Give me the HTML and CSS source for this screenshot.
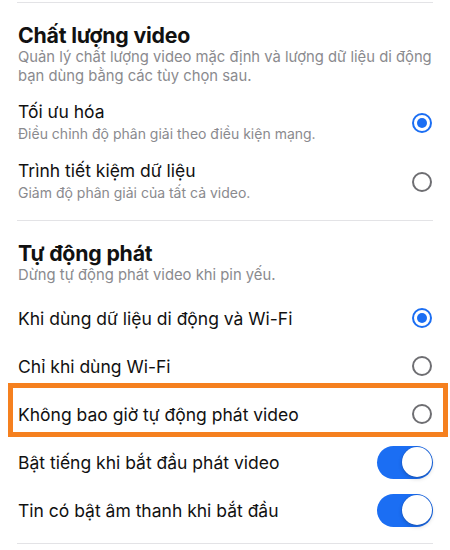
FILE: index.html
```html
<!DOCTYPE html>
<html lang="vi">
<head>
<meta charset="utf-8">
<link rel="stylesheet" href="styles.css">
</head>
<body>
<div class="page">
  <div class="divider first"></div>
  <section class="section">
    <h2 class="heading">Chất lượng video</h2>
    <p class="sub">Quản lý chất lượng video mặc định và lượng dữ liệu di động bạn dùng bằng các tùy chọn sau.</p>
    <div class="option">
      <div class="text">
        <div class="title">Tối ưu hóa</div>
        <div class="desc">Điều chỉnh độ phân giải theo điều kiện mạng.</div>
      </div>
      <span class="radio on"></span>
    </div>
    <div class="option">
      <div class="text">
        <div class="title">Trình tiết kiệm dữ liệu</div>
        <div class="desc">Giảm độ phân giải của tất cả video.</div>
      </div>
      <span class="radio"></span>
    </div>
  </section>
  <div class="divider"></div>
  <section class="section two">
    <h2 class="heading">Tự động phát</h2>
    <p class="sub">Dừng tự động phát video khi pin yếu.</p>
    <div class="list">
      <div class="row"><span class="title">Khi dùng dữ liệu di động và Wi-Fi</span><span class="radio on"></span></div>
      <div class="row"><span class="title">Chỉ khi dùng Wi-Fi</span><span class="radio"></span></div>
      <div class="row marked"><span class="title">Không bao giờ tự động phát video</span><span class="radio"></span><span class="highlight"></span></div>
      <div class="row"><span class="title">Bật tiếng khi bắt đầu phát video</span><span class="toggle"><span class="knob"></span></span></div>
      <div class="row"><span class="title">Tin có bật âm thanh khi bắt đầu</span><span class="toggle"><span class="knob"></span></span></div>
    </div>
  </section>
  <div class="divider"></div>
</div>
</body>
</html>
```
FILE: styles.css
```css
* { box-sizing: border-box; }
html, body { margin: 0; padding: 0; background: #ffffff; }
body {
  font-family: Inter, "Noto Sans", "Liberation Sans", sans-serif;
  color: #111111;
  width: 450px;
  height: 550px;
  overflow: hidden;
}
.page { padding-top: 2px; }
.divider {
  height: 1px;
  background: #e3e3e6;
  margin: 0 17px 0 17px;
}
.section { padding: 19px 0 9px 0; }
.heading {
  margin: 0;
  padding: 0 18px;
  font-size: 21.3px;
  line-height: 26px;
  font-weight: 700;
  letter-spacing: -0.2px;
}
.sub {
  margin: 0;
  padding: 0 18px;
  font-size: 14.8px;
  line-height: 19px;
  color: #8a8a8e;
}
.option {
  display: flex;
  align-items: center;
  justify-content: space-between;
  padding: 8px 18px 8px 18px;
  height: 59px;
}
.section > .sub + .option { margin-top: 7px; }
.title {
  font-size: 17.5px;
  line-height: 22px;
  color: #111111;
}
.desc {
  font-size: 14px;
  line-height: 21px;
  color: #8a8a8e;
}
.radio {
  flex: none;
  width: 20px;
  height: 20px;
  border-radius: 50%;
  border: 2px solid #6e6e72;
  display: flex;
  align-items: center;
  justify-content: center;
}
.row .radio { margin-right: 2px; }
.radio.on { border-color: #1b6ef3; }
.radio.on::after {
  content: "";
  width: 10px;
  height: 10px;
  border-radius: 50%;
  background: #1b6ef3;
}
.section.two { padding-bottom: 9px; }
.section.two .sub { margin-bottom: 9px; }
.row {
  position: relative;
  display: flex;
  align-items: center;
  justify-content: space-between;
  height: 48px;
  padding: 0 16px 0 18px;
}
.row .title { padding-top: 1px; }
.highlight {
  position: absolute;
  left: 8px;
  right: 2px;
  top: -7px;
  bottom: 1px;
  border: 5px solid #f5801f;
  pointer-events: none;
}
.toggle {
  flex: none;
  width: 56px;
  height: 33px;
  border-radius: 17px;
  background: #1b6ef3;
  padding: 1.5px;
  display: flex;
  justify-content: flex-end;
  margin-right: 1px;
}
.knob {
  width: 30px;
  height: 30px;
  border-radius: 50%;
  background: #ffffff;
  box-shadow: 0 0 0 0.5px rgba(0,0,0,0.12), 0 2px 4px rgba(0,0,0,0.18);
}
```
